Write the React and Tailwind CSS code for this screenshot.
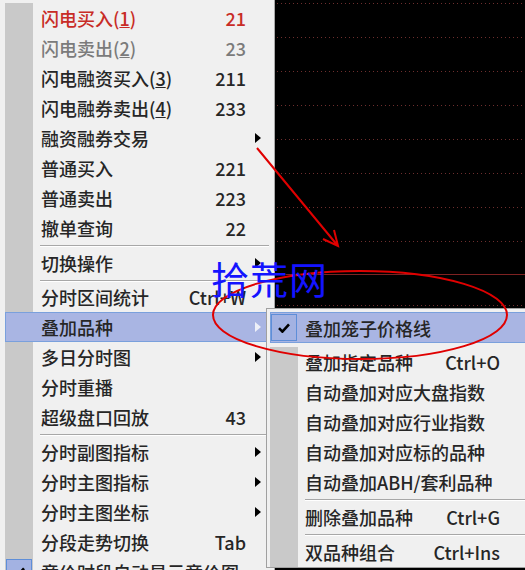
import clsx from 'clsx';

const mainItems = [
  { label: <>闪电买入(<u>1</u>)</>, hint: '21', tone: 'red' },
  { label: <>闪电卖出(<u>2</u>)</>, hint: '23', tone: 'gray' },
  { label: <>闪电融资买入(<u>3</u>)</>, hint: '211' },
  { label: <>闪电融券卖出(<u>4</u>)</>, hint: '233' },
  { label: '融资融券交易', sub: true },
  { label: '普通买入', hint: '221' },
  { label: '普通卖出', hint: '223' },
  { label: '撤单查询', hint: '22' },
  { sep: 5 },
  { label: '切换操作', sub: true },
  { sep: 4 },
  { label: '分时区间统计', hint: 'Ctrl+W' },
  { label: '叠加品种', sub: true, hl: true },
  { label: '多日分时图', sub: true },
  { label: '分时重播' },
  { label: '超级盘口回放', hint: '43' },
  { sep: 5 },
  { label: '分时副图指标', sub: true },
  { label: '分时主图指标', sub: true },
  { label: '分时主图坐标', sub: true },
  { label: '分段走势切换', hint: 'Tab' },
  { label: '竞价时段自动显示竞价图', checked: true },
];

const subItems = [
  { label: '叠加笼子价格线', hl: true, checked: true, h: 'h-[31px]' },
  { label: '叠加指定品种', hint: 'Ctrl+O', h: 'h-[34px] pt-[4px]' },
  { label: '自动叠加对应大盘指数' },
  { label: '自动叠加对应行业指数' },
  { label: '自动叠加对应标的品种' },
  { label: '自动叠加ABH/套利品种' },
  { sep: 5 },
  { label: '删除叠加品种', hint: 'Ctrl+G' },
  { sep: 5 },
  { label: '双品种组合', hint: 'Ctrl+Ins' },
];

function Tri({ light }) {
  return (
    <svg width="6" height="10" viewBox="0 0 6 10">
      <path d="M0 0L6 5L0 10Z" fill={light ? '#eef0f8' : '#000'} />
    </svg>
  );
}

function CheckBox({ className }) {
  return (
    <div className={clsx('flex items-center justify-center border border-[#5e8ed8] bg-[#a3b2e2]', className)}>
      <svg width="12" height="10" viewBox="0 0 12 10">
        <path d="M1 5.2L4.4 8.6L11 1.4" fill="none" stroke="#000" strokeWidth="2.6" />
      </svg>
    </div>
  );
}

function Sep({ h, indent }) {
  return (
    <div className={clsx('flex', h === 4 ? 'h-[4px]' : 'h-[5px]')}>
      <div className="w-[28px] bg-[#c9c9c9]" />
      <div className={clsx('flex-1 mt-[2px] h-[2px] border-t border-[#a7a7a7] border-b border-b-white', indent)} />
    </div>
  );
}

function Row({ item, pad, tail, h }) {
  const { label, hint, sub, tone, hl, checked } = item;
  return (
    <div
      className={clsx(
        'flex items-center',
        h || 'h-[30px]',
        hl && 'bg-[#a9b5e3] outline outline-1 -outline-offset-1 outline-[#7aa0dc]',
        tone === 'red' ? 'text-[#c82c26]' : tone === 'gray' ? 'text-[#7b7b7b]' : 'text-[#262626]'
      )}
    >
      <div className={clsx('w-[28px] self-stretch flex items-center justify-center', !hl && 'bg-[#c9c9c9]')}>
        {checked && <CheckBox className="w-[26px] h-[27px]" />}
      </div>
      <div className={clsx('flex-1 whitespace-nowrap', pad)}>{label}</div>
      {hint && <div className="whitespace-nowrap text-right">{hint}</div>}
      <div className={clsx('flex items-center', tail)}>{sub && <Tri light={hl} />}</div>
    </div>
  );
}

function Chart() {
  const dotted = [3, 37, 71, 105, 139, 173, 207, 241, 305];
  return (
    <svg width="250" height="570" className="block">
      {dotted.map((y) => (
        <line key={y} x1="2" x2="250" y1={y + 0.5} y2={y + 0.5} stroke="#6e2e2e" strokeDasharray="1 3" />
      ))}
      <line x1="0" x2="250" y1="274.5" y2="274.5" stroke="#7e2222" />
    </svg>
  );
}

export default function App() {
  return (
    <div className="relative w-[525px] h-[570px] overflow-hidden flex bg-black font-['Noto_Sans_CJK_SC','Noto_Sans',sans-serif] font-medium text-[18px] leading-none">
      <div className="w-[275px] shrink-0 h-full bg-[#f0f0f0] border-r border-[#a8a8a8] pl-[5px] pr-[5px] pt-[3px]">
        {mainItems.map((item, i) =>
          item.sep ? (
            <Sep key={i} h={item.sep} indent="ml-[7px]" />
          ) : (
            <Row key={i} item={item} pad="pl-[8px]" tail="w-[23px] pl-[9px]" />
          )
        )}
      </div>
      <div className="flex-1">
        <Chart />
      </div>

      <div className="absolute left-[266px] top-[308px] w-[270px] h-[260px] bg-[#f0f0f0] border border-[#a0a0a0] pl-[3px] pr-[3px] pt-[3px]">
        {subItems.map((item, i) =>
          item.sep ? (
            <Sep key={i} h={item.sep} indent="ml-[7px]" />
          ) : (
            <Row key={i} item={item} h={item.h} pad="pl-[7px]" tail="w-[32px]" />
          )
        )}
      </div>

      <svg className="absolute inset-0 pointer-events-none" width="525" height="570">
        <ellipse cx="360" cy="315" rx="147" ry="44" fill="none" stroke="#e00000" strokeWidth="2" />
        <path d="M257 148L338 246M334 230L338 246L323 239" fill="none" stroke="#e00000" strokeWidth="2" />
      </svg>

      <div className="absolute left-[211px] top-[259px] text-[38px] leading-none tracking-[1px] font-normal text-[#1414ff]">
        拾荒网
      </div>
    </div>
  );
}
